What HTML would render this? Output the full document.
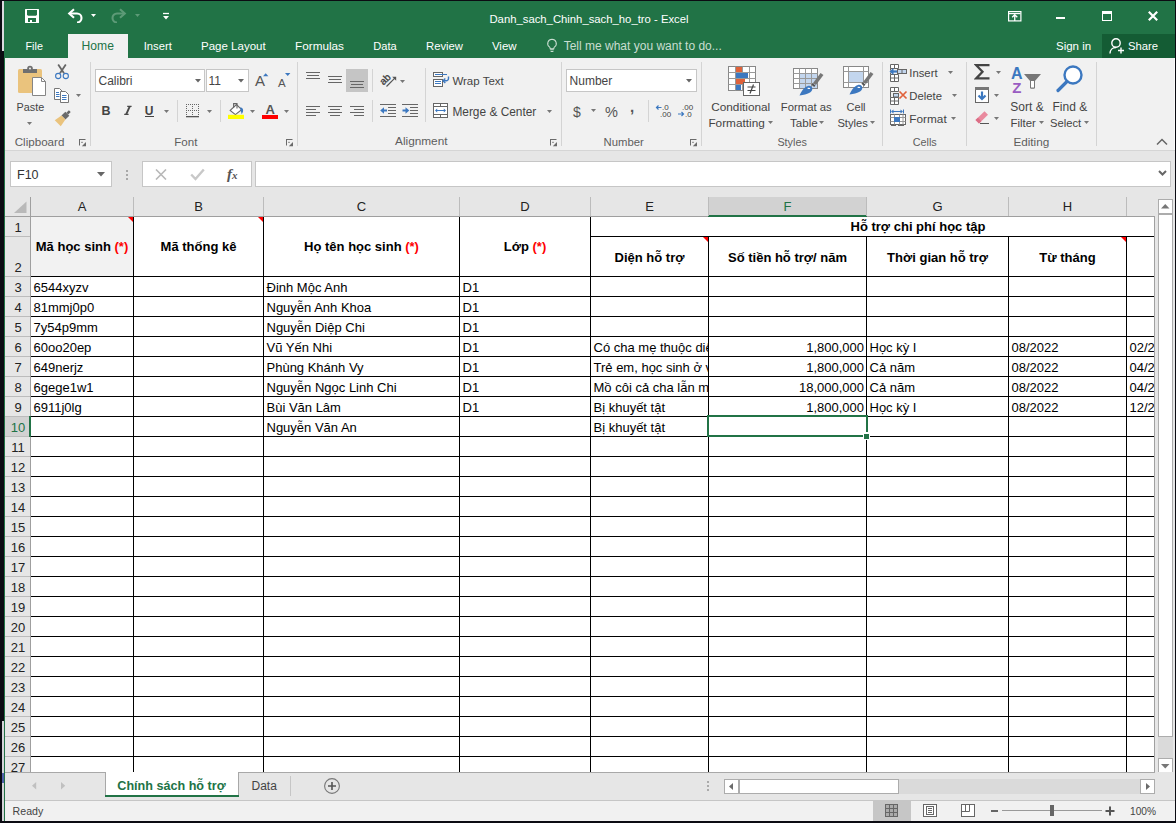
<!DOCTYPE html><html><head><meta charset="utf-8"><style>
html,body{margin:0;padding:0;}
body{width:1176px;height:823px;overflow:hidden;position:relative;background:#0b0b12;font-family:"Liberation Sans", sans-serif;}
body div, body svg{position:absolute;}
</style></head><body>
<div style="left:4px;top:1px;width:1171px;height:57px;background:#217346;"></div>
<div style="left:2px;top:1px;width:2px;height:50px;background:#d9d9de;"></div>
<div style="left:2px;top:721px;width:2px;height:100px;background:#d4d4d8;"></div>
<div style="left:2px;top:773px;width:2px;height:10px;background:#5060a8;"></div>
<div style="left:1102px;top:34px;width:73px;height:24px;background:#145c34;"></div>
<svg style="left:25px;top:9px;" width="14" height="14" viewBox="0 0 14 14"><rect x="0" y="0" width="14" height="14" rx="0.5" fill="#fff"/><path d="M2 1h10v4.8l-1 0.9H3l-1-0.9z" fill="#217346"/><rect x="3" y="9" width="8" height="4" fill="#217346"/><rect x="5" y="11" width="2" height="2" fill="#fff"/></svg>
<svg style="left:67px;top:7px;" width="17" height="16" viewBox="0 0 17 16"><path d="M3 6.5h7a4.5 4.5 0 0 1 0 9" fill="none" stroke="#fff" stroke-width="2.1"/><path d="M7 2.2L2.2 6.5L7 10.8" fill="none" stroke="#fff" stroke-width="2.1"/></svg>
<svg style="left:91px;top:14px;" width="6" height="4" viewBox="0 0 6 4"><path d="M0 0h5l-2.5 3z" fill="#fff"/></svg>
<svg style="left:110px;top:7px;" width="17" height="16" viewBox="0 0 17 16"><path d="M14 6.5h-7a4.5 4.5 0 0 0 0 9" fill="none" stroke="#5d9a77" stroke-width="2.1"/><path d="M10 2.2L14.8 6.5L10 10.8" fill="none" stroke="#5d9a77" stroke-width="2.1"/></svg>
<svg style="left:135px;top:14px;" width="6" height="4" viewBox="0 0 6 4"><path d="M0 0h5l-2.5 3z" fill="#5d9a77"/></svg>
<svg style="left:162px;top:12px;" width="8" height="9" viewBox="0 0 8 9"><path d="M1 1.5h6" stroke="#fff" stroke-width="1.3"/><path d="M1 4h6l-3 3.5z" fill="#fff"/></svg>
<div style="left:289px;width:600px;text-align:center;top:12.00px;font-size:11.3px;line-height:15px;color:#fff;font-weight:normal;white-space:nowrap;">Danh_sach_Chinh_sach_ho_tro - Excel</div>
<svg style="left:1008px;top:11px;" width="14" height="11" viewBox="0 0 14 11"><rect x="0.6" y="0.6" width="12.3" height="9.3" fill="none" stroke="#fff" stroke-width="1.2"/><path d="M1 2.6h11.5" stroke="#fff" stroke-width="1.2"/><path d="M6.75 10V3.6 M4.2 6.3l2.55-2.6 2.55 2.6" fill="none" stroke="#fff" stroke-width="1.3"/></svg>
<div style="left:1056px;top:17px;width:9px;height:2px;background:#fff;"></div>
<div style="left:1102px;top:11px;width:10px;height:10px;border:1px solid #fff;border-top:3px solid #fff;box-sizing:border-box;"></div>
<svg style="left:1147px;top:10px;" width="12" height="12" viewBox="0 0 12 12"><path d="M1.8 1.8L10.2 10.2 M10.2 1.8L1.8 10.2" stroke="#fff" stroke-width="2.2"/></svg>
<div style="left:68px;top:34px;width:60px;height:24px;background:#f1f1f1;"></div>
<div style="left:25.5px;top:39.00px;font-size:10.796277145811787px;line-height:14px;color:#fff;font-weight:normal;white-space:nowrap;">File</div>
<div style="left:81.6px;top:38.00px;font-size:12.146204311152765px;line-height:16px;color:#217346;font-weight:normal;white-space:nowrap;">Home</div>
<div style="left:143.7px;top:39.00px;font-size:11.236254581806065px;line-height:15px;color:#fff;font-weight:normal;white-space:nowrap;">Insert</div>
<div style="left:201px;top:39.00px;font-size:11.520997180590593px;line-height:15px;color:#fff;font-weight:normal;white-space:nowrap;">Page Layout</div>
<div style="left:295px;top:38.00px;font-size:11.75764847030594px;line-height:15px;color:#fff;font-weight:normal;white-space:nowrap;">Formulas</div>
<div style="left:373.2px;top:39.00px;font-size:11.124260355029586px;line-height:14px;color:#fff;font-weight:normal;white-space:nowrap;">Data</div>
<div style="left:426px;top:39.00px;font-size:11.283354510800509px;line-height:15px;color:#fff;font-weight:normal;white-space:nowrap;">Review</div>
<div style="left:491.9px;top:39.00px;font-size:11.539356339666538px;line-height:15px;color:#fff;font-weight:normal;white-space:nowrap;">View</div>
<svg style="left:546px;top:38px;" width="12" height="15" viewBox="0 0 12 15"><path d="M6 1.2a4.3 4.3 0 0 0-2.6 7.7c.6.5.8 1.1.8 1.8h3.6c0-.7.2-1.3.8-1.8A4.3 4.3 0 0 0 6 1.2z" fill="none" stroke="#c7ddd0" stroke-width="1.1"/><path d="M4.2 11.8h3.6 M4.6 13.5h2.8" stroke="#c7ddd0" stroke-width="1.1"/></svg>
<div style="left:563.7px;top:38.00px;font-size:12px;line-height:16px;color:#c9ded1;font-weight:normal;white-space:nowrap;">Tell me what you want to do...</div>
<div style="left:1056px;top:39.00px;font-size:11.5px;line-height:15px;color:#fff;font-weight:normal;white-space:nowrap;">Sign in</div>
<div style="left:1128px;top:39.00px;font-size:11.3px;line-height:15px;color:#fff;font-weight:normal;white-space:nowrap;">Share</div>
<svg style="left:1108px;top:37px;" width="18" height="18" viewBox="0 0 18 18"><circle cx="8" cy="6" r="4.2" fill="none" stroke="#fff" stroke-width="1.4"/><path d="M2 16.5c0-3.5 2.5-6 6-6" fill="none" stroke="#fff" stroke-width="1.4"/><path d="M13 10.5v6 M10 13.5h6" stroke="#fff" stroke-width="1.4"/></svg>
<div style="left:4px;top:58px;width:1px;height:763px;background:#217346;"></div>
<div style="left:5px;top:58px;width:1170px;height:92px;background:#f1f1f1;"></div>
<div style="left:5px;top:150px;width:1170px;height:1px;background:#d5d5d5;"></div>
<div style="left:90px;top:62px;width:1px;height:84px;background:#d4d4d4;"></div>
<div style="left:297px;top:62px;width:1px;height:84px;background:#d4d4d4;"></div>
<div style="left:561px;top:62px;width:1px;height:84px;background:#d4d4d4;"></div>
<div style="left:701px;top:62px;width:1px;height:84px;background:#d4d4d4;"></div>
<div style="left:882px;top:62px;width:1px;height:84px;background:#d4d4d4;"></div>
<div style="left:966px;top:62px;width:1px;height:84px;background:#d4d4d4;"></div>
<div style="left:1096px;top:62px;width:1px;height:84px;background:#d4d4d4;"></div>
<div style="left:14.7px;top:134.00px;font-size:11.612149532710282px;line-height:15px;color:#5e5e5e;font-weight:normal;white-space:nowrap;">Clipboard</div>
<div style="left:174.3px;top:135.00px;font-size:11.595168679716783px;line-height:15px;color:#5e5e5e;font-weight:normal;white-space:nowrap;">Font</div>
<div style="left:395px;top:134.00px;font-size:11.829085457271365px;line-height:15px;color:#5e5e5e;font-weight:normal;white-space:nowrap;">Alignment</div>
<div style="left:603.6px;top:135.00px;font-size:11.330834114339268px;line-height:15px;color:#5e5e5e;font-weight:normal;white-space:nowrap;">Number</div>
<div style="left:777.4px;top:135.00px;font-size:10.8px;line-height:14px;color:#5e5e5e;font-weight:normal;white-space:nowrap;">Styles</div>
<div style="left:912.7px;top:135.00px;font-size:10.8px;line-height:14px;color:#5e5e5e;font-weight:normal;white-space:nowrap;">Cells</div>
<div style="left:1013.4px;top:134.00px;font-size:11.741618969746524px;line-height:15px;color:#5e5e5e;font-weight:normal;white-space:nowrap;">Editing</div>
<svg style="left:78px;top:139px;" width="10" height="8" viewBox="0 0 10 8"><path d="M1 0.5H7.5 M1.5 0V6.5" fill="none" stroke="#6a6a6a" stroke-width="1"/><path d="M8 3V7.2H3.8z" fill="#6a6a6a"/><rect x="3.4" y="2.8" width="1.2" height="1.2" fill="#6a6a6a"/></svg>
<svg style="left:285px;top:139px;" width="10" height="8" viewBox="0 0 10 8"><path d="M1 0.5H7.5 M1.5 0V6.5" fill="none" stroke="#6a6a6a" stroke-width="1"/><path d="M8 3V7.2H3.8z" fill="#6a6a6a"/><rect x="3.4" y="2.8" width="1.2" height="1.2" fill="#6a6a6a"/></svg>
<svg style="left:549px;top:139px;" width="10" height="8" viewBox="0 0 10 8"><path d="M1 0.5H7.5 M1.5 0V6.5" fill="none" stroke="#6a6a6a" stroke-width="1"/><path d="M8 3V7.2H3.8z" fill="#6a6a6a"/><rect x="3.4" y="2.8" width="1.2" height="1.2" fill="#6a6a6a"/></svg>
<svg style="left:689px;top:139px;" width="10" height="8" viewBox="0 0 10 8"><path d="M1 0.5H7.5 M1.5 0V6.5" fill="none" stroke="#6a6a6a" stroke-width="1"/><path d="M8 3V7.2H3.8z" fill="#6a6a6a"/><rect x="3.4" y="2.8" width="1.2" height="1.2" fill="#6a6a6a"/></svg>
<svg style="left:16px;top:65px;" width="32" height="32" viewBox="0 0 32 32"><rect x="2" y="4" width="24" height="24" rx="1.5" fill="#eac37d"/><path d="M7 4h14v4H7z" fill="#6f6f6f"/><circle cx="14" cy="3.5" r="2.8" fill="#6f6f6f"/><circle cx="14" cy="3.5" r="1" fill="#f1f1f1"/><path d="M16.5 12.5h9l4 4v14h-13z" fill="#fff" stroke="#858585" stroke-width="1"/><path d="M25.5 12.5v4h4" fill="none" stroke="#858585" stroke-width="1"/></svg>
<div style="left:16.6px;top:100.00px;font-size:10.8px;line-height:14px;color:#444;font-weight:normal;white-space:nowrap;">Paste</div>
<svg style="left:27px;top:121.5px;" width="6" height="4" viewBox="0 0 6 4"><path d="M0 0h5l-2.5 3z" fill="#777"/></svg>
<svg style="left:54px;top:64px;" width="16" height="16" viewBox="0 0 16 16"><path d="M4.2 0.6L10 9.3 M11.8 0.6L6 9.3" stroke="#666" stroke-width="1.8"/><circle cx="4.2" cy="12" r="2.6" fill="none" stroke="#3c78c0" stroke-width="1.1"/><circle cx="11.8" cy="12" r="2.6" fill="none" stroke="#3c78c0" stroke-width="1.1"/></svg>
<svg style="left:53px;top:87px;" width="17" height="16" viewBox="0 0 17 16"><path d="M1.5 1.5h5l2.5 2.5v8.5h-7.5z" fill="#fff" stroke="#777" stroke-width="1"/><path d="M7.5 4.5h5l3 3v8h-8z" fill="#fff" stroke="#777" stroke-width="1"/><path d="M3 5.5h3 M3 7.5h3.5 M3 9.5h3.5 M9 8.5h4.5 M9 10.5h4.5 M9 12.5h4.5" stroke="#3c78c0" stroke-width="1"/></svg>
<svg style="left:76px;top:94px;" width="6" height="4" viewBox="0 0 6 4"><path d="M0 0h5l-2.5 3z" fill="#777"/></svg>
<svg style="left:53px;top:110px;" width="18" height="17" viewBox="0 0 18 17"><path d="M15.88 0.28 L13.41 2.76 L15.24 4.59 L17.72 2.12z" fill="#666"/><path d="M12.35 1.69 L8.46 5.58 L12.42 9.54 L16.31 5.65z" fill="#6a6a6a"/><path d="M8.46 5.58 L1.77 10.22 L7.78 16.23 L12.42 9.54z" fill="#eac37d"/></svg>
<div style="left:95px;top:69px;width:110px;height:23px;background:#fff;border:1px solid #c6c6c6;box-sizing:border-box;"></div>
<div style="left:206px;top:69px;width:43px;height:23px;background:#fff;border:1px solid #c6c6c6;box-sizing:border-box;"></div>
<div style="left:98.5px;top:73.00px;font-size:12px;line-height:16px;color:#444;font-weight:normal;white-space:nowrap;">Calibri</div>
<div style="left:208.5px;top:73.00px;font-size:12px;line-height:16px;color:#444;font-weight:normal;white-space:nowrap;">11</div>
<svg style="left:195px;top:79px;" width="7" height="4" viewBox="0 0 7 4"><path d="M0 0h6l-3 3.5z" fill="#666"/></svg>
<svg style="left:238px;top:79px;" width="7" height="4" viewBox="0 0 7 4"><path d="M0 0h6l-3 3.5z" fill="#666"/></svg>
<div style="left:255px;top:71.00px;font-size:15px;line-height:20px;color:#555;font-weight:normal;white-space:nowrap;">A</div>
<svg style="left:263px;top:72.5px;" width="6" height="4" viewBox="0 0 6 4"><path d="M0 3.3h5.4l-2.7-3.1z" fill="#3c78c0"/></svg>
<div style="left:278px;top:76.00px;font-size:11.5px;line-height:15px;color:#555;font-weight:normal;white-space:nowrap;">A</div>
<svg style="left:285px;top:73px;" width="6" height="4" viewBox="0 0 6 4"><path d="M0 0h5.4l-2.7 3.1z" fill="#3c78c0"/></svg>
<div style="left:101.6px;top:103.00px;font-size:12.5px;line-height:16px;color:#444;font-weight:bold;white-space:nowrap;">B</div>
<svg style="left:123px;top:105px;" width="10" height="11" viewBox="0 0 10 11"><path d="M4.2 1.3H8.6 M1.2 9.4H5.6" stroke="#4a4a4a" stroke-width="1.3"/><path d="M6.8 1.3L3.2 9.4" stroke="#4a4a4a" stroke-width="1.9"/></svg>
<div style="left:144.8px;top:103.00px;font-size:12px;line-height:16px;color:#444;font-weight:bold;white-space:nowrap;">U</div>
<div style="left:145px;top:116px;width:9px;height:1px;background:#444;"></div>
<svg style="left:164px;top:110px;" width="6" height="4" viewBox="0 0 6 4"><path d="M0 0h5l-2.5 3z" fill="#777"/></svg>
<div style="left:177px;top:100px;width:1px;height:22px;background:#d4d4d4;"></div>
<svg style="left:186px;top:104px;" width="14" height="14" viewBox="0 0 14 14"><rect x="0" y="0" width="1" height="1" fill="#666"/><rect x="0" y="0" width="1" height="1" fill="#666"/><rect x="12" y="0" width="1" height="1" fill="#666"/><rect x="6" y="0" width="1" height="1" fill="#666"/><rect x="0" y="6" width="1" height="1" fill="#666"/><rect x="2" y="0" width="1" height="1" fill="#666"/><rect x="0" y="2" width="1" height="1" fill="#666"/><rect x="12" y="2" width="1" height="1" fill="#666"/><rect x="6" y="2" width="1" height="1" fill="#666"/><rect x="2" y="6" width="1" height="1" fill="#666"/><rect x="4" y="0" width="1" height="1" fill="#666"/><rect x="0" y="4" width="1" height="1" fill="#666"/><rect x="12" y="4" width="1" height="1" fill="#666"/><rect x="6" y="4" width="1" height="1" fill="#666"/><rect x="4" y="6" width="1" height="1" fill="#666"/><rect x="6" y="0" width="1" height="1" fill="#666"/><rect x="0" y="6" width="1" height="1" fill="#666"/><rect x="12" y="6" width="1" height="1" fill="#666"/><rect x="6" y="6" width="1" height="1" fill="#666"/><rect x="6" y="6" width="1" height="1" fill="#666"/><rect x="8" y="0" width="1" height="1" fill="#666"/><rect x="0" y="8" width="1" height="1" fill="#666"/><rect x="12" y="8" width="1" height="1" fill="#666"/><rect x="6" y="8" width="1" height="1" fill="#666"/><rect x="8" y="6" width="1" height="1" fill="#666"/><rect x="10" y="0" width="1" height="1" fill="#666"/><rect x="0" y="10" width="1" height="1" fill="#666"/><rect x="12" y="10" width="1" height="1" fill="#666"/><rect x="6" y="10" width="1" height="1" fill="#666"/><rect x="10" y="6" width="1" height="1" fill="#666"/><rect x="12" y="0" width="1" height="1" fill="#666"/><rect x="0" y="12" width="1" height="1" fill="#666"/><rect x="12" y="12" width="1" height="1" fill="#666"/><rect x="6" y="12" width="1" height="1" fill="#666"/><rect x="12" y="6" width="1" height="1" fill="#666"/><rect x="0" y="12" width="13" height="1.3" fill="#555"/></svg>
<svg style="left:207px;top:110px;" width="6" height="4" viewBox="0 0 6 4"><path d="M0 0h5l-2.5 3z" fill="#777"/></svg>
<div style="left:220px;top:100px;width:1px;height:22px;background:#d4d4d4;"></div>
<svg style="left:228px;top:102px;" width="18" height="18" viewBox="0 0 18 18"><path d="M2.2 8.4L8.5 2.5 13.6 7.6 7.4 12.6z" fill="#fff" stroke="#666" stroke-width="1.1"/><path d="M5.6 5.8V1.6H9V6.6" fill="none" stroke="#666" stroke-width="1.1"/><path d="M12.3 5.3c2.5.6 4.2 2.8 1.4 7-.3-1.5-.8-3-1.2-4z" fill="#3c78c0"/><rect x="0" y="12.8" width="16" height="4.2" fill="#ffff00"/></svg>
<svg style="left:250px;top:110px;" width="6" height="4" viewBox="0 0 6 4"><path d="M0 0h5l-2.5 3z" fill="#777"/></svg>
<div style="left:265.5px;top:101.00px;font-size:13px;line-height:17px;color:#555;font-weight:bold;white-space:nowrap;">A</div>
<div style="left:262px;top:115px;width:16px;height:4px;background:#ff0000;"></div>
<svg style="left:284px;top:110px;" width="6" height="4" viewBox="0 0 6 4"><path d="M0 0h5l-2.5 3z" fill="#777"/></svg>
<svg style="left:306px;top:72px;" width="16" height="10" viewBox="0 0 16 10"><rect x="0" y="0" width="14" height="1" fill="#666"/><rect x="1" y="3" width="12" height="1" fill="#666"/><rect x="0" y="6" width="14" height="1" fill="#666"/></svg>
<svg style="left:328px;top:76px;" width="16" height="10" viewBox="0 0 16 10"><rect x="0" y="0" width="14" height="1" fill="#666"/><rect x="1" y="3" width="12" height="1" fill="#666"/><rect x="0" y="6" width="14" height="1" fill="#666"/></svg>
<div style="left:346px;top:69px;width:22px;height:23px;background:#c5c5c5;"></div>
<svg style="left:350px;top:81px;" width="16" height="10" viewBox="0 0 16 10"><rect x="0" y="0" width="14" height="1" fill="#666"/><rect x="1" y="3" width="12" height="1" fill="#666"/><rect x="0" y="6" width="14" height="1" fill="#666"/></svg>
<div style="left:372px;top:69px;width:1px;height:23px;background:#d4d4d4;"></div>
<svg style="left:378px;top:70px;" width="20" height="20" viewBox="0 0 20 20"><g transform="translate(5.6 15.6) rotate(-45)"><text x="0" y="0" font-size="10" font-family="Liberation Sans" fill="#333" stroke="#444" stroke-width="0.3">ab</text></g><path d="M8.5 16.5L16.8 8.2" stroke="#555" stroke-width="1.2"/><path d="M14.2 6.8H18.2V10.8z" fill="#555"/></svg>
<svg style="left:400px;top:80px;" width="6" height="4" viewBox="0 0 6 4"><path d="M0 0h5l-2.5 3z" fill="#777"/></svg>
<svg style="left:306px;top:106px;" width="16" height="13" viewBox="0 0 16 13"><rect x="0" y="0" width="14" height="1" fill="#666"/><rect x="0" y="3" width="10" height="1" fill="#666"/><rect x="0" y="6" width="14" height="1" fill="#666"/><rect x="0" y="9" width="10" height="1" fill="#666"/></svg>
<svg style="left:328px;top:106px;" width="16" height="13" viewBox="0 0 16 13"><rect x="0" y="0" width="14" height="1" fill="#666"/><rect x="2" y="3" width="10" height="1" fill="#666"/><rect x="0" y="6" width="14" height="1" fill="#666"/><rect x="2" y="9" width="10" height="1" fill="#666"/></svg>
<svg style="left:350px;top:106px;" width="16" height="13" viewBox="0 0 16 13"><rect x="0" y="0" width="14" height="1" fill="#666"/><rect x="4" y="3" width="10" height="1" fill="#666"/><rect x="0" y="6" width="14" height="1" fill="#666"/><rect x="4" y="9" width="10" height="1" fill="#666"/></svg>
<div style="left:372px;top:100px;width:1px;height:22px;background:#d4d4d4;"></div>
<svg style="left:380px;top:103px;" width="17" height="15" viewBox="0 0 17 15"><path d="M0 1.5h16 M8 4.5h8 M8 7.5h8 M8 10.5h8 M0 13.5h16" stroke="#666" stroke-width="1"/><path d="M0.2 7.5L4 4.3v6.4z" fill="#3c78c0"/><path d="M3 7.5h4" stroke="#3c78c0" stroke-width="2"/></svg>
<svg style="left:402px;top:103px;" width="17" height="15" viewBox="0 0 17 15"><path d="M0 1.5h16 M8 4.5h8 M8 7.5h8 M8 10.5h8 M0 13.5h16" stroke="#666" stroke-width="1"/><path d="M7.3 7.5L3.5 4.3v6.4z" fill="#3c78c0"/><path d="M0.5 7.5h4" stroke="#3c78c0" stroke-width="2"/></svg>
<div style="left:425px;top:68px;width:1px;height:54px;background:#d4d4d4;"></div>
<svg style="left:432px;top:71px;" width="18" height="17" viewBox="0 0 18 17"><rect x="1.5" y="1.5" width="9" height="4" fill="#fff" stroke="#666" stroke-width="1"/><rect x="1.5" y="8.5" width="9" height="7" fill="#fff" stroke="#666" stroke-width="1"/><path d="M3 3.5h12 M3 10.5h6 M3 12.5h6" stroke="#3c78c0" stroke-width="1"/><path d="M16.5 5.5v2a2.3 2.3 0 0 1-2.3 2.3H11.3" fill="none" stroke="#3c78c0" stroke-width="1.4"/><path d="M13.3 7.6L11 9.8l2.3 2.2" fill="none" stroke="#3c78c0" stroke-width="1.4"/></svg>
<div style="left:452.4px;top:74.00px;font-size:11.5px;line-height:15px;color:#444;font-weight:normal;white-space:nowrap;">Wrap Text</div>
<svg style="left:432px;top:102px;" width="17" height="17" viewBox="0 0 17 17"><rect x="1.5" y="1.5" width="14" height="14" fill="#fff" stroke="#666" stroke-width="1"/><path d="M1.5 4.5h14 M1.5 12.5h14 M8.5 1.5v3 M8.5 12.5v3" stroke="#666" stroke-width="1"/><path d="M4 8.5h9" stroke="#3c78c0" stroke-width="1"/><path d="M3 8.5L5.2 6.5v4z M14 8.5L11.8 6.5v4z" fill="#3c78c0"/></svg>
<div style="left:452.4px;top:105.00px;font-size:11.9px;line-height:15px;color:#444;font-weight:normal;white-space:nowrap;">Merge &amp; Center</div>
<svg style="left:547px;top:110px;" width="6" height="4" viewBox="0 0 6 4"><path d="M0 0h5l-2.5 3z" fill="#777"/></svg>
<div style="left:566px;top:69px;width:131px;height:23px;background:#fff;border:1px solid #c6c6c6;box-sizing:border-box;"></div>
<div style="left:569.6px;top:73.00px;font-size:12px;line-height:16px;color:#444;font-weight:normal;white-space:nowrap;">Number</div>
<svg style="left:686px;top:79px;" width="7" height="4" viewBox="0 0 7 4"><path d="M0 0h6l-3 3.5z" fill="#666"/></svg>
<div style="left:573px;top:103.00px;font-size:14px;line-height:18px;color:#555;font-weight:normal;white-space:nowrap;">$</div>
<svg style="left:591px;top:109px;" width="6" height="4" viewBox="0 0 6 4"><path d="M0 0h5l-2.5 3z" fill="#777"/></svg>
<div style="left:605px;top:103.00px;font-size:14.5px;line-height:19px;color:#555;font-weight:normal;white-space:nowrap;">%</div>
<div style="left:630px;top:97.00px;font-size:15px;line-height:20px;color:#555;font-weight:bold;white-space:nowrap;">,</div>
<div style="left:648px;top:100px;width:1px;height:22px;background:#d4d4d4;"></div>
<svg style="left:655px;top:103px;" width="17" height="15" viewBox="0 0 17 15"><text x="7" y="7" font-size="8" font-family="Liberation Sans" fill="#444">.0</text><text x="5" y="14" font-size="8" font-family="Liberation Sans" fill="#444">.00</text><path d="M1.5 4.5h5 M3.5 2.5l-2 2 2 2" fill="none" stroke="#3c78c0" stroke-width="1.2"/></svg>
<svg style="left:677px;top:103px;" width="17" height="15" viewBox="0 0 17 15"><text x="5" y="7" font-size="8" font-family="Liberation Sans" fill="#444">.00</text><text x="8" y="14" font-size="8" font-family="Liberation Sans" fill="#444">.0</text><path d="M1 11h5.5 M4.5 9l2 2-2 2" fill="none" stroke="#3c78c0" stroke-width="1.2"/></svg>
<svg style="left:728px;top:65px;" width="33" height="32" viewBox="0 0 33 32"><g fill="#fff" stroke="#888" stroke-width="1"><rect x="0.5" y="1.5" width="27" height="24"/></g><path d="M7.5 1.5v24 M14.5 1.5v24 M21.5 1.5v24 M0.5 7.5h27 M0.5 13.5h27 M0.5 19.5h27" stroke="#999" stroke-width="1"/><rect x="8" y="2" width="6" height="5" fill="#e0623a"/><rect x="8" y="8" width="12" height="5" fill="#3c78c0"/><rect x="8" y="14" width="9" height="5" fill="#e0623a"/><rect x="8" y="20" width="5" height="5" fill="#3c78c0"/><rect x="15.5" y="17.5" width="16" height="13" fill="#fff" stroke="#666" stroke-width="1"/><path d="M19.5 22h8 M19.5 25.5h8 M25.5 19.5l-3.5 9" stroke="#444" stroke-width="1.2"/></svg>
<div style="left:711.2px;top:100.00px;font-size:11.8px;line-height:15px;color:#444;font-weight:normal;white-space:nowrap;">Conditional</div>
<div style="left:708.4px;top:116.00px;font-size:11.8px;line-height:15px;color:#444;font-weight:normal;white-space:nowrap;">Formatting</div>
<svg style="left:768px;top:121px;" width="6" height="4" viewBox="0 0 6 4"><path d="M0 0h5l-2.5 3z" fill="#777"/></svg>
<svg style="left:792px;top:66px;" width="32" height="31" viewBox="0 0 32 31"><rect x="1.5" y="2.5" width="24" height="20" fill="#fff" stroke="#888"/><rect x="8" y="8" width="17" height="14" fill="#c3d6ee"/><path d="M7.5 2.5v20 M13.5 2.5v20 M19.5 2.5v20 M1.5 7.5h24 M1.5 12.5h24 M1.5 17.5h24" stroke="#999" stroke-width="1"/><path d="M30 8L22.5 18" stroke="#777" stroke-width="3.6"/><path d="M23.5 19.5l-2.8-2.3-1.3 1.6 2.8 2.3z" fill="#555"/><path d="M7.5 29.5c1.5-3.5 4.5-8.5 8.5-9.5 2.5-.6 4.5 1 4.3 3.2-.3 2.8-4 5.3-12.8 6.3z" fill="#3c78c0"/><path d="M15.2 22.2c1.2-.8 2.8-.5 3.1.6-.6.4-2 .3-3.1-.6z" fill="#fff"/></svg>
<div style="left:780.8px;top:100.00px;font-size:11.3px;line-height:15px;color:#444;font-weight:normal;white-space:nowrap;">Format as</div>
<div style="left:790px;top:115.00px;font-size:11.6px;line-height:15px;color:#444;font-weight:normal;white-space:nowrap;">Table</div>
<svg style="left:819px;top:121px;" width="6" height="4" viewBox="0 0 6 4"><path d="M0 0h5l-2.5 3z" fill="#777"/></svg>
<svg style="left:842px;top:65px;" width="32" height="31" viewBox="0 0 32 31"><rect x="1.5" y="1.5" width="25" height="21" fill="#fff" stroke="#888"/><path d="M1.5 6.5h25 M1.5 17.5h25 M6.5 1.5v21 M21.5 1.5v21" stroke="#999" stroke-width="1"/><rect x="7" y="7" width="14" height="10" fill="#c3d6ee"/><path d="M30 8L22.5 18" stroke="#777" stroke-width="3.6"/><path d="M23.5 19.5l-2.8-2.3-1.3 1.6 2.8 2.3z" fill="#555"/><path d="M7.5 29.5c1.5-3.5 4.5-8.5 8.5-9.5 2.5-.6 4.5 1 4.3 3.2-.3 2.8-4 5.3-12.8 6.3z" fill="#3c78c0"/><path d="M15.2 22.2c1.2-.8 2.8-.5 3.1.6-.6.4-2 .3-3.1-.6z" fill="#fff"/></svg>
<div style="left:846.6px;top:100.00px;font-size:11px;line-height:14px;color:#444;font-weight:normal;white-space:nowrap;">Cell</div>
<div style="left:837.4px;top:116.00px;font-size:11.2px;line-height:15px;color:#444;font-weight:normal;white-space:nowrap;">Styles</div>
<svg style="left:870px;top:121px;" width="6" height="4" viewBox="0 0 6 4"><path d="M0 0h5l-2.5 3z" fill="#777"/></svg>
<svg style="left:889px;top:64px;" width="19" height="19" viewBox="0 0 19 19"><path d="M1.5 0.5h8v4h-8z M5.5 0.5v4 M1.5 10.5h8v7h-8z M1.5 14h8 M5.5 10.5v7 M1.5 4.5v2 M1.5 8.5v2" fill="#fff" stroke="#666" stroke-width="1"/><rect x="8.5" y="5.5" width="9" height="4" fill="#c3d6ee" stroke="#666" stroke-width="1"/><path d="M13 5.5v4" stroke="#666" stroke-width="1"/><path d="M0.5 7.5L4.5 4v7z" fill="#3c78c0"/><path d="M3 7.5h5" stroke="#3c78c0" stroke-width="2.2"/></svg>
<div style="left:909.3px;top:66.00px;font-size:11.3px;line-height:15px;color:#444;font-weight:normal;white-space:nowrap;">Insert</div>
<svg style="left:948px;top:71px;" width="6" height="4" viewBox="0 0 6 4"><path d="M0 0h5l-2.5 3z" fill="#777"/></svg>
<svg style="left:889px;top:87px;" width="19" height="19" viewBox="0 0 19 19"><path d="M1.5 0.5h8v4h-8z M5.5 0.5v4 M1.5 10.5h8v7h-8z M1.5 14h8 M5.5 10.5v7 M1.5 4.5v6" fill="#fff" stroke="#666" stroke-width="1"/><rect x="4.5" y="6.5" width="5" height="3.5" fill="#c3d6ee" stroke="#666" stroke-width="1"/><path d="M10.5 4.5l7 7 M17.5 4.5l-7 7" stroke="#e0623a" stroke-width="1.7"/></svg>
<div style="left:909.3px;top:89.00px;font-size:11.3px;line-height:15px;color:#444;font-weight:normal;white-space:nowrap;">Delete</div>
<svg style="left:952px;top:94px;" width="6" height="4" viewBox="0 0 6 4"><path d="M0 0h5l-2.5 3z" fill="#777"/></svg>
<svg style="left:889px;top:109px;" width="18" height="18" viewBox="0 0 18 18"><path d="M1.5 0.5v4 M14.5 0.5v4" stroke="#3c78c0" stroke-width="1"/><path d="M3 2.5h10" stroke="#3c78c0" stroke-width="1"/><path d="M2 2.5l2.5-2v4z M14 2.5l-2.5-2v4z" fill="#3c78c0"/><rect x="1.5" y="5.5" width="15" height="10" fill="#fff" stroke="#666" stroke-width="1"/><path d="M1.5 8.5h15 M1.5 12.5h15 M5.5 5.5v10 M10.5 5.5v10 M14 5.5v10" stroke="#999" stroke-width="1"/><rect x="5" y="8" width="6" height="5" fill="#3c78c0"/><path d="M2 16.5h5 M9 16.5h6" stroke="#666" stroke-width="1"/></svg>
<div style="left:909.3px;top:112.00px;font-size:11.8px;line-height:15px;color:#444;font-weight:normal;white-space:nowrap;">Format</div>
<svg style="left:951px;top:117px;" width="6" height="4" viewBox="0 0 6 4"><path d="M0 0h5l-2.5 3z" fill="#777"/></svg>
<svg style="left:974px;top:64px;" width="17" height="16" viewBox="0 0 17 16"><path d="M15.5 1.2H2.2l6.3 6.6-6.3 6.6h13.3" fill="none" stroke="#444" stroke-width="2.3" stroke-linejoin="miter"/></svg>
<svg style="left:996px;top:71px;" width="6" height="4" viewBox="0 0 6 4"><path d="M0 0h5l-2.5 3z" fill="#777"/></svg>
<svg style="left:975px;top:87px;" width="15" height="16" viewBox="0 0 15 16"><rect x="0.5" y="0.5" width="13" height="15" fill="#fff" stroke="#666"/><rect x="0" y="0" width="14" height="3" fill="#777"/><path d="M7 4.5v7" stroke="#3c78c0" stroke-width="2.2"/><path d="M3.5 8.5L7 12l3.5-3.5" fill="none" stroke="#3c78c0" stroke-width="2.2"/></svg>
<svg style="left:994px;top:94px;" width="6" height="4" viewBox="0 0 6 4"><path d="M0 0h5l-2.5 3z" fill="#777"/></svg>
<svg style="left:975px;top:110px;" width="15" height="15" viewBox="0 0 15 15"><path d="M0.5 10L9.5 1.2 13 4.8 4 13.5z" fill="#e98a9e"/><path d="M0.5 10L2.9 7.7 6.4 11.2 4 13.5z" fill="#dc6e86"/><path d="M5 13.5H14" stroke="#555" stroke-width="1"/></svg>
<svg style="left:994px;top:117px;" width="6" height="4" viewBox="0 0 6 4"><path d="M0 0h5l-2.5 3z" fill="#777"/></svg>
<svg style="left:1011px;top:66px;" width="32" height="28" viewBox="0 0 32 28"><text x="0" y="13" font-size="16" font-weight="bold" font-family="Liberation Sans" fill="#3c78c0">A</text><text x="1.3" y="27" font-size="15" font-weight="bold" font-family="Liberation Sans" fill="#9a5cc2">Z</text><path d="M13 8h17l-6.5 7.5v7h-4v-7z" fill="#777"/><path d="M19.5 15v7h4v-7" fill="#fff" stroke="#777"/></svg>
<div style="left:1010.3px;top:99.00px;font-size:12px;line-height:16px;color:#444;font-weight:normal;white-space:nowrap;">Sort &amp;</div>
<div style="left:1010.6px;top:116.00px;font-size:11.4px;line-height:15px;color:#444;font-weight:normal;white-space:nowrap;">Filter</div>
<svg style="left:1039px;top:121px;" width="6" height="4" viewBox="0 0 6 4"><path d="M0 0h5l-2.5 3z" fill="#777"/></svg>
<svg style="left:1055px;top:64px;" width="30" height="30" viewBox="0 0 30 30"><circle cx="18" cy="11" r="8.5" fill="#fff" stroke="#3c78c0" stroke-width="2.4"/><path d="M12 17.5L3 26.5" stroke="#3c78c0" stroke-width="3.2" stroke-linecap="round"/></svg>
<div style="left:1052.5px;top:99.00px;font-size:12px;line-height:16px;color:#444;font-weight:normal;white-space:nowrap;">Find &amp;</div>
<div style="left:1050px;top:116.00px;font-size:11.2px;line-height:15px;color:#444;font-weight:normal;white-space:nowrap;">Select</div>
<svg style="left:1084px;top:121px;" width="6" height="4" viewBox="0 0 6 4"><path d="M0 0h5l-2.5 3z" fill="#777"/></svg>
<svg style="left:1156px;top:138px;" width="12" height="8" viewBox="0 0 12 8"><path d="M1 6.5l5-5 5 5" fill="none" stroke="#666" stroke-width="1.5"/></svg>
<div style="left:5px;top:151px;width:1170px;height:46px;background:#e6e6e6;"></div>
<div style="left:10px;top:161px;width:102px;height:26px;background:#fff;border:1px solid #c6c6c6;box-sizing:border-box;"></div>
<div style="left:17px;top:167.00px;font-size:12.5px;line-height:16px;color:#333;font-weight:normal;white-space:nowrap;">F10</div>
<svg style="left:97px;top:172px;" width="9" height="5" viewBox="0 0 9 5"><path d="M0 0h8l-4 4.5z" fill="#666"/></svg>
<div style="left:126px;top:170px;width:2px;height:2px;background:#a8a8a8;"></div>
<div style="left:126px;top:174px;width:2px;height:2px;background:#a8a8a8;"></div>
<div style="left:126px;top:178px;width:2px;height:2px;background:#a8a8a8;"></div>
<div style="left:142px;top:161px;width:110px;height:26px;background:#fff;border:1px solid #c6c6c6;box-sizing:border-box;"></div>
<svg style="left:155px;top:169px;" width="12" height="11" viewBox="0 0 12 11"><path d="M1 0.5l10 10 M11 0.5l-10 10" stroke="#b8b8b8" stroke-width="1.6"/></svg>
<svg style="left:190px;top:168px;" width="15" height="13" viewBox="0 0 15 13"><path d="M1.2 6.5l4.3 4.5L13.8 1.5" fill="none" stroke="#c8c8c8" stroke-width="2.4"/></svg>
<div style="left:227px;top:164.00px;font-size:15px;line-height:20px;color:#555;font-weight:bold;white-space:nowrap;font-style:italic;font-family:'Liberation Serif',serif;">f<span style="font-size:11px">x</span></div>
<div style="left:255px;top:161px;width:916px;height:26px;background:#fff;border:1px solid #c6c6c6;box-sizing:border-box;"></div>
<svg style="left:1158px;top:170px;" width="9" height="7" viewBox="0 0 9 7"><path d="M1 1l3.5 3.5L8 1" fill="none" stroke="#666" stroke-width="2"/></svg>
<div style="left:5px;top:197px;width:1150px;height:20px;background:#e6e6e6;"></div>
<div style="left:5px;top:217px;width:25px;height:555px;background:#e6e6e6;"></div>
<div style="left:31px;top:217px;width:1123px;height:555px;background:#fff;"></div>
<div style="left:31px;top:217px;width:102px;height:59px;background:#f2f2f2;"></div>
<svg style="left:13px;top:201px;" width="15" height="13" viewBox="0 0 15 13"><path d="M13.5 0.5V12H1z" fill="#b9b9b9"/></svg>
<div style="left:5px;top:216px;width:1149px;height:1px;background:#9f9f9f;"></div>
<div style="left:30px;top:197px;width:1px;height:575px;background:#9f9f9f;"></div>
<div style="left:709px;top:197px;width:157px;height:18px;background:#d2d2d2;"></div>
<div style="left:708px;top:215px;width:159px;height:2px;background:#217346;"></div>
<div style="left:133px;top:197px;width:1px;height:19px;background:#bcbcbc;"></div>
<div style="left:263px;top:197px;width:1px;height:19px;background:#bcbcbc;"></div>
<div style="left:459px;top:197px;width:1px;height:19px;background:#bcbcbc;"></div>
<div style="left:590px;top:197px;width:1px;height:19px;background:#bcbcbc;"></div>
<div style="left:708px;top:197px;width:1px;height:19px;background:#bcbcbc;"></div>
<div style="left:866px;top:197px;width:1px;height:19px;background:#bcbcbc;"></div>
<div style="left:1008px;top:197px;width:1px;height:19px;background:#bcbcbc;"></div>
<div style="left:1126px;top:197px;width:1px;height:19px;background:#bcbcbc;"></div>
<div style="left:1154px;top:216px;width:1px;height:556px;background:#a0a0a0;"></div>
<div style="left:-218.0px;width:600px;text-align:center;top:198.00px;font-size:13px;line-height:17px;color:#222;font-weight:normal;white-space:nowrap;">A</div>
<div style="left:-101.5px;width:600px;text-align:center;top:198.00px;font-size:13px;line-height:17px;color:#222;font-weight:normal;white-space:nowrap;">B</div>
<div style="left:61.5px;width:600px;text-align:center;top:198.00px;font-size:13px;line-height:17px;color:#222;font-weight:normal;white-space:nowrap;">C</div>
<div style="left:225.0px;width:600px;text-align:center;top:198.00px;font-size:13px;line-height:17px;color:#222;font-weight:normal;white-space:nowrap;">D</div>
<div style="left:349.5px;width:600px;text-align:center;top:198.00px;font-size:13px;line-height:17px;color:#222;font-weight:normal;white-space:nowrap;">E</div>
<div style="left:487.5px;width:600px;text-align:center;top:198.00px;font-size:13px;line-height:17px;color:#217346;font-weight:normal;white-space:nowrap;">F</div>
<div style="left:637.5px;width:600px;text-align:center;top:198.00px;font-size:13px;line-height:17px;color:#222;font-weight:normal;white-space:nowrap;">G</div>
<div style="left:767.5px;width:600px;text-align:center;top:198.00px;font-size:13px;line-height:17px;color:#222;font-weight:normal;white-space:nowrap;">H</div>
<div style="left:5px;top:236px;width:25px;height:1px;background:#bcbcbc;"></div>
<div style="left:-282px;width:600px;text-align:center;top:219.00px;font-size:13px;line-height:17px;color:#222;font-weight:normal;white-space:nowrap;">1</div>
<div style="left:5px;top:276px;width:25px;height:1px;background:#bcbcbc;"></div>
<div style="left:-282px;width:600px;text-align:center;top:259.00px;font-size:13px;line-height:17px;color:#222;font-weight:normal;white-space:nowrap;">2</div>
<div style="left:5px;top:296px;width:25px;height:1px;background:#bcbcbc;"></div>
<div style="left:-282px;width:600px;text-align:center;top:279.00px;font-size:13px;line-height:17px;color:#222;font-weight:normal;white-space:nowrap;">3</div>
<div style="left:5px;top:316px;width:25px;height:1px;background:#bcbcbc;"></div>
<div style="left:-282px;width:600px;text-align:center;top:299.00px;font-size:13px;line-height:17px;color:#222;font-weight:normal;white-space:nowrap;">4</div>
<div style="left:5px;top:336px;width:25px;height:1px;background:#bcbcbc;"></div>
<div style="left:-282px;width:600px;text-align:center;top:319.00px;font-size:13px;line-height:17px;color:#222;font-weight:normal;white-space:nowrap;">5</div>
<div style="left:5px;top:356px;width:25px;height:1px;background:#bcbcbc;"></div>
<div style="left:-282px;width:600px;text-align:center;top:339.00px;font-size:13px;line-height:17px;color:#222;font-weight:normal;white-space:nowrap;">6</div>
<div style="left:5px;top:376px;width:25px;height:1px;background:#bcbcbc;"></div>
<div style="left:-282px;width:600px;text-align:center;top:359.00px;font-size:13px;line-height:17px;color:#222;font-weight:normal;white-space:nowrap;">7</div>
<div style="left:5px;top:396px;width:25px;height:1px;background:#bcbcbc;"></div>
<div style="left:-282px;width:600px;text-align:center;top:379.00px;font-size:13px;line-height:17px;color:#222;font-weight:normal;white-space:nowrap;">8</div>
<div style="left:5px;top:416px;width:25px;height:1px;background:#bcbcbc;"></div>
<div style="left:-282px;width:600px;text-align:center;top:399.00px;font-size:13px;line-height:17px;color:#222;font-weight:normal;white-space:nowrap;">9</div>
<div style="left:5px;top:436px;width:25px;height:1px;background:#bcbcbc;"></div>
<div style="left:5px;top:417px;width:24px;height:19px;background:#d2d2d2;"></div>
<div style="left:29px;top:416px;width:2px;height:21px;background:#217346;"></div>
<div style="left:-282px;width:600px;text-align:center;top:419.00px;font-size:13px;line-height:17px;color:#217346;font-weight:normal;white-space:nowrap;">10</div>
<div style="left:5px;top:456px;width:25px;height:1px;background:#bcbcbc;"></div>
<div style="left:-282px;width:600px;text-align:center;top:439.00px;font-size:13px;line-height:17px;color:#222;font-weight:normal;white-space:nowrap;">11</div>
<div style="left:5px;top:476px;width:25px;height:1px;background:#bcbcbc;"></div>
<div style="left:-282px;width:600px;text-align:center;top:459.00px;font-size:13px;line-height:17px;color:#222;font-weight:normal;white-space:nowrap;">12</div>
<div style="left:5px;top:496px;width:25px;height:1px;background:#bcbcbc;"></div>
<div style="left:-282px;width:600px;text-align:center;top:479.00px;font-size:13px;line-height:17px;color:#222;font-weight:normal;white-space:nowrap;">13</div>
<div style="left:5px;top:516px;width:25px;height:1px;background:#bcbcbc;"></div>
<div style="left:-282px;width:600px;text-align:center;top:499.00px;font-size:13px;line-height:17px;color:#222;font-weight:normal;white-space:nowrap;">14</div>
<div style="left:5px;top:536px;width:25px;height:1px;background:#bcbcbc;"></div>
<div style="left:-282px;width:600px;text-align:center;top:519.00px;font-size:13px;line-height:17px;color:#222;font-weight:normal;white-space:nowrap;">15</div>
<div style="left:5px;top:556px;width:25px;height:1px;background:#bcbcbc;"></div>
<div style="left:-282px;width:600px;text-align:center;top:539.00px;font-size:13px;line-height:17px;color:#222;font-weight:normal;white-space:nowrap;">16</div>
<div style="left:5px;top:576px;width:25px;height:1px;background:#bcbcbc;"></div>
<div style="left:-282px;width:600px;text-align:center;top:559.00px;font-size:13px;line-height:17px;color:#222;font-weight:normal;white-space:nowrap;">17</div>
<div style="left:5px;top:596px;width:25px;height:1px;background:#bcbcbc;"></div>
<div style="left:-282px;width:600px;text-align:center;top:579.00px;font-size:13px;line-height:17px;color:#222;font-weight:normal;white-space:nowrap;">18</div>
<div style="left:5px;top:616px;width:25px;height:1px;background:#bcbcbc;"></div>
<div style="left:-282px;width:600px;text-align:center;top:599.00px;font-size:13px;line-height:17px;color:#222;font-weight:normal;white-space:nowrap;">19</div>
<div style="left:5px;top:636px;width:25px;height:1px;background:#bcbcbc;"></div>
<div style="left:-282px;width:600px;text-align:center;top:619.00px;font-size:13px;line-height:17px;color:#222;font-weight:normal;white-space:nowrap;">20</div>
<div style="left:5px;top:656px;width:25px;height:1px;background:#bcbcbc;"></div>
<div style="left:-282px;width:600px;text-align:center;top:639.00px;font-size:13px;line-height:17px;color:#222;font-weight:normal;white-space:nowrap;">21</div>
<div style="left:5px;top:676px;width:25px;height:1px;background:#bcbcbc;"></div>
<div style="left:-282px;width:600px;text-align:center;top:659.00px;font-size:13px;line-height:17px;color:#222;font-weight:normal;white-space:nowrap;">22</div>
<div style="left:5px;top:696px;width:25px;height:1px;background:#bcbcbc;"></div>
<div style="left:-282px;width:600px;text-align:center;top:679.00px;font-size:13px;line-height:17px;color:#222;font-weight:normal;white-space:nowrap;">23</div>
<div style="left:5px;top:716px;width:25px;height:1px;background:#bcbcbc;"></div>
<div style="left:-282px;width:600px;text-align:center;top:699.00px;font-size:13px;line-height:17px;color:#222;font-weight:normal;white-space:nowrap;">24</div>
<div style="left:5px;top:736px;width:25px;height:1px;background:#bcbcbc;"></div>
<div style="left:-282px;width:600px;text-align:center;top:719.00px;font-size:13px;line-height:17px;color:#222;font-weight:normal;white-space:nowrap;">25</div>
<div style="left:5px;top:756px;width:25px;height:1px;background:#bcbcbc;"></div>
<div style="left:-282px;width:600px;text-align:center;top:739.00px;font-size:13px;line-height:17px;color:#222;font-weight:normal;white-space:nowrap;">26</div>
<div style="left:-282px;width:600px;text-align:center;top:759.00px;font-size:13px;line-height:17px;color:#222;font-weight:normal;white-space:nowrap;">27</div>
<div style="left:133px;top:217px;width:1px;height:555px;background:#000;"></div>
<div style="left:263px;top:217px;width:1px;height:555px;background:#000;"></div>
<div style="left:459px;top:217px;width:1px;height:555px;background:#000;"></div>
<div style="left:590px;top:217px;width:1px;height:555px;background:#000;"></div>
<div style="left:708px;top:236px;width:1px;height:536px;background:#000;"></div>
<div style="left:866px;top:236px;width:1px;height:536px;background:#000;"></div>
<div style="left:1008px;top:236px;width:1px;height:536px;background:#000;"></div>
<div style="left:1126px;top:236px;width:1px;height:536px;background:#000;"></div>
<div style="left:590px;top:236px;width:564px;height:1px;background:#000;"></div>
<div style="left:31px;top:276px;width:1123px;height:1px;background:#000;"></div>
<div style="left:31px;top:296px;width:1123px;height:1px;background:#000;"></div>
<div style="left:31px;top:316px;width:1123px;height:1px;background:#000;"></div>
<div style="left:31px;top:336px;width:1123px;height:1px;background:#000;"></div>
<div style="left:31px;top:356px;width:1123px;height:1px;background:#000;"></div>
<div style="left:31px;top:376px;width:1123px;height:1px;background:#000;"></div>
<div style="left:31px;top:396px;width:1123px;height:1px;background:#000;"></div>
<div style="left:31px;top:416px;width:1123px;height:1px;background:#000;"></div>
<div style="left:31px;top:436px;width:1123px;height:1px;background:#000;"></div>
<div style="left:31px;top:456px;width:1123px;height:1px;background:#000;"></div>
<div style="left:31px;top:476px;width:1123px;height:1px;background:#000;"></div>
<div style="left:31px;top:496px;width:1123px;height:1px;background:#000;"></div>
<div style="left:31px;top:516px;width:1123px;height:1px;background:#000;"></div>
<div style="left:31px;top:536px;width:1123px;height:1px;background:#000;"></div>
<div style="left:31px;top:556px;width:1123px;height:1px;background:#000;"></div>
<div style="left:31px;top:576px;width:1123px;height:1px;background:#000;"></div>
<div style="left:31px;top:596px;width:1123px;height:1px;background:#000;"></div>
<div style="left:31px;top:616px;width:1123px;height:1px;background:#000;"></div>
<div style="left:31px;top:636px;width:1123px;height:1px;background:#000;"></div>
<div style="left:31px;top:656px;width:1123px;height:1px;background:#000;"></div>
<div style="left:31px;top:676px;width:1123px;height:1px;background:#000;"></div>
<div style="left:31px;top:696px;width:1123px;height:1px;background:#000;"></div>
<div style="left:31px;top:716px;width:1123px;height:1px;background:#000;"></div>
<div style="left:31px;top:736px;width:1123px;height:1px;background:#000;"></div>
<div style="left:31px;top:756px;width:1123px;height:1px;background:#000;"></div>
<div style="left:-218px;width:600px;text-align:center;top:238.00px;font-size:13px;line-height:17px;color:#000;font-weight:bold;white-space:nowrap;">Mã học sinh <span style="color:#ff0000">(*)</span></div>
<div style="left:-101.5px;width:600px;text-align:center;top:238.00px;font-size:13px;line-height:17px;color:#000;font-weight:bold;white-space:nowrap;">Mã thống kê</div>
<div style="left:61.5px;width:600px;text-align:center;top:238.00px;font-size:13px;line-height:17px;color:#000;font-weight:bold;white-space:nowrap;">Họ tên học sinh <span style="color:#ff0000">(*)</span></div>
<div style="left:225px;width:600px;text-align:center;top:238.00px;font-size:13px;line-height:17px;color:#000;font-weight:bold;white-space:nowrap;">Lớp <span style="color:#ff0000">(*)</span></div>
<div style="left:618px;width:600px;text-align:center;top:218.00px;font-size:13px;line-height:17px;color:#000;font-weight:bold;white-space:nowrap;">Hỗ trợ chi phí học tập</div>
<div style="left:349.5px;width:600px;text-align:center;top:249.00px;font-size:13px;line-height:17px;color:#000;font-weight:bold;white-space:nowrap;">Diện hỗ trợ</div>
<div style="left:487.5px;width:600px;text-align:center;top:249.00px;font-size:13px;line-height:17px;color:#000;font-weight:bold;white-space:nowrap;">Số tiền hỗ trợ/ năm</div>
<div style="left:637.5px;width:600px;text-align:center;top:249.00px;font-size:13px;line-height:17px;color:#000;font-weight:bold;white-space:nowrap;">Thời gian hỗ trợ</div>
<div style="left:767.5px;width:600px;text-align:center;top:249.00px;font-size:13px;line-height:17px;color:#000;font-weight:bold;white-space:nowrap;">Từ tháng</div>
<svg style="left:128px;top:217px;" width="5" height="5" viewBox="0 0 5 5"><path d="M0 0h5v5z" fill="#ff0000"/></svg>
<svg style="left:258px;top:217px;" width="5" height="5" viewBox="0 0 5 5"><path d="M0 0h5v5z" fill="#ff0000"/></svg>
<svg style="left:703px;top:237px;" width="5" height="5" viewBox="0 0 5 5"><path d="M0 0h5v5z" fill="#ff0000"/></svg>
<svg style="left:1121px;top:237px;" width="5" height="5" viewBox="0 0 5 5"><path d="M0 0h5v5z" fill="#ff0000"/></svg>
<div style="left:31px;top:277px;width:102px;height:19px;overflow:hidden;">
<div style="left:2.5px;top:2px;font-size:13px;line-height:17px;color:#000;white-space:nowrap;">6544xyzv</div></div>
<div style="left:264px;top:277px;width:195px;height:19px;overflow:hidden;">
<div style="left:2.5px;top:2px;font-size:13px;line-height:17px;color:#000;white-space:nowrap;">Đinh Mộc Anh</div></div>
<div style="left:460px;top:277px;width:130px;height:19px;overflow:hidden;">
<div style="left:2.5px;top:2px;font-size:13px;line-height:17px;color:#000;white-space:nowrap;">D1</div></div>
<div style="left:31px;top:297px;width:102px;height:19px;overflow:hidden;">
<div style="left:2.5px;top:2px;font-size:13px;line-height:17px;color:#000;white-space:nowrap;">81mmj0p0</div></div>
<div style="left:264px;top:297px;width:195px;height:19px;overflow:hidden;">
<div style="left:2.5px;top:2px;font-size:13px;line-height:17px;color:#000;white-space:nowrap;">Nguyễn Anh Khoa</div></div>
<div style="left:460px;top:297px;width:130px;height:19px;overflow:hidden;">
<div style="left:2.5px;top:2px;font-size:13px;line-height:17px;color:#000;white-space:nowrap;">D1</div></div>
<div style="left:31px;top:317px;width:102px;height:19px;overflow:hidden;">
<div style="left:2.5px;top:2px;font-size:13px;line-height:17px;color:#000;white-space:nowrap;">7y54p9mm</div></div>
<div style="left:264px;top:317px;width:195px;height:19px;overflow:hidden;">
<div style="left:2.5px;top:2px;font-size:13px;line-height:17px;color:#000;white-space:nowrap;">Nguyễn Diệp Chi</div></div>
<div style="left:460px;top:317px;width:130px;height:19px;overflow:hidden;">
<div style="left:2.5px;top:2px;font-size:13px;line-height:17px;color:#000;white-space:nowrap;">D1</div></div>
<div style="left:31px;top:337px;width:102px;height:19px;overflow:hidden;">
<div style="left:2.5px;top:2px;font-size:13px;line-height:17px;color:#000;white-space:nowrap;">60oo20ep</div></div>
<div style="left:264px;top:337px;width:195px;height:19px;overflow:hidden;">
<div style="left:2.5px;top:2px;font-size:13px;line-height:17px;color:#000;white-space:nowrap;">Vũ Yến Nhi</div></div>
<div style="left:460px;top:337px;width:130px;height:19px;overflow:hidden;">
<div style="left:2.5px;top:2px;font-size:13px;line-height:17px;color:#000;white-space:nowrap;">D1</div></div>
<div style="left:591px;top:337px;width:117px;height:19px;overflow:hidden;">
<div style="left:2.5px;top:2px;font-size:13px;line-height:17px;color:#000;white-space:nowrap;">Có cha mẹ thuộc diện hộ nghèo</div></div>
<div style="left:709px;top:337px;width:157px;height:19px;overflow:hidden;">
<div style="right:2px;top:2px;font-size:13px;line-height:17px;color:#000;white-space:nowrap;">1,800,000</div></div>
<div style="left:867px;top:337px;width:141px;height:19px;overflow:hidden;">
<div style="left:2.5px;top:2px;font-size:13px;line-height:17px;color:#000;white-space:nowrap;">Học kỳ I</div></div>
<div style="left:1009px;top:337px;width:117px;height:19px;overflow:hidden;">
<div style="left:2.5px;top:2px;font-size:13px;line-height:17px;color:#000;white-space:nowrap;">08/2022</div></div>
<div style="left:1127px;top:337px;width:27px;height:19px;overflow:hidden;">
<div style="left:2.5px;top:2px;font-size:13px;line-height:17px;color:#000;white-space:nowrap;">02/2023</div></div>
<div style="left:31px;top:357px;width:102px;height:19px;overflow:hidden;">
<div style="left:2.5px;top:2px;font-size:13px;line-height:17px;color:#000;white-space:nowrap;">649nerjz</div></div>
<div style="left:264px;top:357px;width:195px;height:19px;overflow:hidden;">
<div style="left:2.5px;top:2px;font-size:13px;line-height:17px;color:#000;white-space:nowrap;">Phùng Khánh Vy</div></div>
<div style="left:460px;top:357px;width:130px;height:19px;overflow:hidden;">
<div style="left:2.5px;top:2px;font-size:13px;line-height:17px;color:#000;white-space:nowrap;">D1</div></div>
<div style="left:591px;top:357px;width:117px;height:19px;overflow:hidden;">
<div style="left:2.5px;top:2px;font-size:13px;line-height:17px;color:#000;white-space:nowrap;">Trẻ em, học sinh ở vùng</div></div>
<div style="left:709px;top:357px;width:157px;height:19px;overflow:hidden;">
<div style="right:2px;top:2px;font-size:13px;line-height:17px;color:#000;white-space:nowrap;">1,800,000</div></div>
<div style="left:867px;top:357px;width:141px;height:19px;overflow:hidden;">
<div style="left:2.5px;top:2px;font-size:13px;line-height:17px;color:#000;white-space:nowrap;">Cả năm</div></div>
<div style="left:1009px;top:357px;width:117px;height:19px;overflow:hidden;">
<div style="left:2.5px;top:2px;font-size:13px;line-height:17px;color:#000;white-space:nowrap;">08/2022</div></div>
<div style="left:1127px;top:357px;width:27px;height:19px;overflow:hidden;">
<div style="left:2.5px;top:2px;font-size:13px;line-height:17px;color:#000;white-space:nowrap;">04/2023</div></div>
<div style="left:31px;top:377px;width:102px;height:19px;overflow:hidden;">
<div style="left:2.5px;top:2px;font-size:13px;line-height:17px;color:#000;white-space:nowrap;">6gege1w1</div></div>
<div style="left:264px;top:377px;width:195px;height:19px;overflow:hidden;">
<div style="left:2.5px;top:2px;font-size:13px;line-height:17px;color:#000;white-space:nowrap;">Nguyễn Ngọc Linh Chi</div></div>
<div style="left:460px;top:377px;width:130px;height:19px;overflow:hidden;">
<div style="left:2.5px;top:2px;font-size:13px;line-height:17px;color:#000;white-space:nowrap;">D1</div></div>
<div style="left:591px;top:377px;width:117px;height:19px;overflow:hidden;">
<div style="left:2.5px;top:2px;font-size:13px;line-height:17px;color:#000;white-space:nowrap;">Mồ côi cả cha lẫn mẹ</div></div>
<div style="left:709px;top:377px;width:157px;height:19px;overflow:hidden;">
<div style="right:2px;top:2px;font-size:13px;line-height:17px;color:#000;white-space:nowrap;">18,000,000</div></div>
<div style="left:867px;top:377px;width:141px;height:19px;overflow:hidden;">
<div style="left:2.5px;top:2px;font-size:13px;line-height:17px;color:#000;white-space:nowrap;">Cả năm</div></div>
<div style="left:1009px;top:377px;width:117px;height:19px;overflow:hidden;">
<div style="left:2.5px;top:2px;font-size:13px;line-height:17px;color:#000;white-space:nowrap;">08/2022</div></div>
<div style="left:1127px;top:377px;width:27px;height:19px;overflow:hidden;">
<div style="left:2.5px;top:2px;font-size:13px;line-height:17px;color:#000;white-space:nowrap;">04/2023</div></div>
<div style="left:31px;top:397px;width:102px;height:19px;overflow:hidden;">
<div style="left:2.5px;top:2px;font-size:13px;line-height:17px;color:#000;white-space:nowrap;">6911j0lg</div></div>
<div style="left:264px;top:397px;width:195px;height:19px;overflow:hidden;">
<div style="left:2.5px;top:2px;font-size:13px;line-height:17px;color:#000;white-space:nowrap;">Bùi Văn Lâm</div></div>
<div style="left:460px;top:397px;width:130px;height:19px;overflow:hidden;">
<div style="left:2.5px;top:2px;font-size:13px;line-height:17px;color:#000;white-space:nowrap;">D1</div></div>
<div style="left:591px;top:397px;width:117px;height:19px;overflow:hidden;">
<div style="left:2.5px;top:2px;font-size:13px;line-height:17px;color:#000;white-space:nowrap;">Bị khuyết tật</div></div>
<div style="left:709px;top:397px;width:157px;height:19px;overflow:hidden;">
<div style="right:2px;top:2px;font-size:13px;line-height:17px;color:#000;white-space:nowrap;">1,800,000</div></div>
<div style="left:867px;top:397px;width:141px;height:19px;overflow:hidden;">
<div style="left:2.5px;top:2px;font-size:13px;line-height:17px;color:#000;white-space:nowrap;">Học kỳ I</div></div>
<div style="left:1009px;top:397px;width:117px;height:19px;overflow:hidden;">
<div style="left:2.5px;top:2px;font-size:13px;line-height:17px;color:#000;white-space:nowrap;">08/2022</div></div>
<div style="left:1127px;top:397px;width:27px;height:19px;overflow:hidden;">
<div style="left:2.5px;top:2px;font-size:13px;line-height:17px;color:#000;white-space:nowrap;">12/2022</div></div>
<div style="left:264px;top:417px;width:195px;height:19px;overflow:hidden;">
<div style="left:2.5px;top:2px;font-size:13px;line-height:17px;color:#000;white-space:nowrap;">Nguyễn Văn An</div></div>
<div style="left:591px;top:417px;width:117px;height:19px;overflow:hidden;">
<div style="left:2.5px;top:2px;font-size:13px;line-height:17px;color:#000;white-space:nowrap;">Bị khuyết tật</div></div>
<div style="left:707px;top:415px;width:161px;height:22px;border:2px solid #217346;box-sizing:border-box;"></div>
<div style="left:863px;top:432px;width:7px;height:2px;background:#fff;"></div>
<div style="left:864px;top:434px;width:5px;height:5px;background:#217346;border:1px solid #fff;box-sizing:content-box;left:863px;top:433px;"></div>
<div style="left:1155px;top:197px;width:20px;height:576px;background:#e6e6e6;"></div>
<div style="left:1158px;top:199px;width:15px;height:15px;background:#fff;border:1px solid #acacac;box-sizing:border-box;"></div>
<svg style="left:1161px;top:204px;" width="9" height="5" viewBox="0 0 9 5"><path d="M0 4.5h8.5L4.25 0z" fill="#777"/></svg>
<div style="left:1158px;top:214px;width:15px;height:523px;background:#fff;border:1px solid #acacac;box-sizing:border-box;"></div>
<div style="left:1158px;top:737px;width:15px;height:21px;background:#dadada;"></div>
<div style="left:1158px;top:758px;width:15px;height:15px;background:#fff;border:1px solid #acacac;box-sizing:border-box;"></div>
<svg style="left:1161px;top:764px;" width="9" height="5" viewBox="0 0 9 5"><path d="M0 0h8.5L4.25 4.5z" fill="#777"/></svg>
<div style="left:5px;top:772px;width:1170px;height:28px;background:#e6e6e6;"></div>
<div style="left:5px;top:772px;width:100px;height:1px;background:#a8a8a8;"></div>
<div style="left:239px;top:772px;width:916px;height:1px;background:#a8a8a8;"></div>
<svg style="left:32px;top:781.5px;" width="5" height="8" viewBox="0 0 5 8"><path d="M4.2 0v7.5L0 3.75z" fill="#c0c0c0"/></svg>
<svg style="left:61px;top:781.5px;" width="5" height="8" viewBox="0 0 5 8"><path d="M0 0v7.5L4.2 3.75z" fill="#c0c0c0"/></svg>
<div style="left:105px;top:772px;width:134px;height:25px;background:#fff;border-left:1px solid #a8a8a8;border-right:1px solid #a8a8a8;box-sizing:border-box;"></div>
<div style="left:105px;top:795px;width:134px;height:2px;background:#217346;"></div>
<div style="left:117.3px;top:778.00px;font-size:12.6px;line-height:16px;color:#217346;font-weight:bold;white-space:nowrap;">Chính sách hỗ trợ</div>
<div style="left:251.5px;top:778.00px;font-size:12px;line-height:16px;color:#444;font-weight:normal;white-space:nowrap;">Data</div>
<div style="left:290px;top:776px;width:1px;height:20px;background:#c6c6c6;"></div>
<svg style="left:324px;top:778px;" width="16" height="16" viewBox="0 0 16 16"><circle cx="8" cy="8" r="7.4" fill="none" stroke="#777" stroke-width="1.1"/><path d="M8 4v8 M4 8h8" stroke="#555" stroke-width="1.6"/></svg>
<div style="left:707px;top:781px;width:2px;height:2px;background:#aaa;"></div>
<div style="left:707px;top:785px;width:2px;height:2px;background:#aaa;"></div>
<div style="left:707px;top:789px;width:2px;height:2px;background:#aaa;"></div>
<div style="left:724px;top:779px;width:431px;height:15px;background:#dadada;"></div>
<div style="left:724px;top:779px;width:15px;height:15px;background:#fff;border:1px solid #acacac;box-sizing:border-box;"></div>
<svg style="left:729px;top:783px;" width="5" height="8" viewBox="0 0 5 8"><path d="M4 0v7L0 3.5z" fill="#6a6a6a"/></svg>
<div style="left:739px;top:779px;width:160px;height:15px;background:#fff;border:1px solid #acacac;box-sizing:border-box;"></div>
<div style="left:1140px;top:779px;width:15px;height:15px;background:#fff;border:1px solid #acacac;box-sizing:border-box;"></div>
<svg style="left:1146px;top:783px;" width="5" height="8" viewBox="0 0 5 8"><path d="M0 0v7L4 3.5z" fill="#6a6a6a"/></svg>
<div style="left:5px;top:800px;width:1170px;height:1px;background:#c6c6c6;"></div>
<div style="left:5px;top:801px;width:1170px;height:20px;background:#f1f1f1;"></div>
<div style="left:12.6px;top:804.00px;font-size:10.6px;line-height:14px;color:#444;font-weight:normal;white-space:nowrap;">Ready</div>
<div style="left:873px;top:801px;width:38px;height:20px;background:#c6c6c6;"></div>
<svg style="left:885px;top:804px;" width="13" height="13" viewBox="0 0 13 13"><rect x="0" y="0" width="13" height="13" fill="#ababab"/><path d="M0.5 0v13 M4.5 0v13 M8.5 0v13 M12.5 0v13 M0 0.5h13 M0 4.5h13 M0 8.5h13 M0 12.5h13" stroke="#666" stroke-width="1"/></svg>
<svg style="left:923px;top:804px;" width="14" height="13" viewBox="0 0 14 13"><rect x="0.5" y="0.5" width="13" height="12" fill="#fff" stroke="#666" stroke-width="1"/><rect x="3.5" y="2.5" width="7" height="8" fill="#fff" stroke="#666" stroke-width="1"/><path d="M5 4.5h4 M5 6.5h4 M5 8.5h4" stroke="#666" stroke-width="1"/></svg>
<svg style="left:961px;top:804px;" width="14" height="13" viewBox="0 0 14 13"><rect x="0.5" y="0.5" width="13" height="12" fill="#fff" stroke="#666" stroke-width="1"/><path d="M0.5 7.5H8.5V0.5 M4.5 0.5v7" fill="none" stroke="#666" stroke-width="1"/></svg>
<div style="left:991px;top:810px;width:7px;height:2px;background:#666;"></div>
<div style="left:1002px;top:810px;width:100px;height:1px;background:#999;"></div>
<div style="left:1050px;top:805px;width:4px;height:11px;background:#666;"></div>
<svg style="left:1105px;top:806px;" width="10" height="10" viewBox="0 0 10 10"><path d="M5 0.5v9 M0.5 5h9" stroke="#555" stroke-width="2"/></svg>
<div style="left:1130px;top:805.00px;font-size:10.2px;line-height:13px;color:#444;font-weight:normal;white-space:nowrap;">100%</div>
<div style="left:1174px;top:58px;width:1px;height:92px;background:#fafafa;"></div>
</body></html>
